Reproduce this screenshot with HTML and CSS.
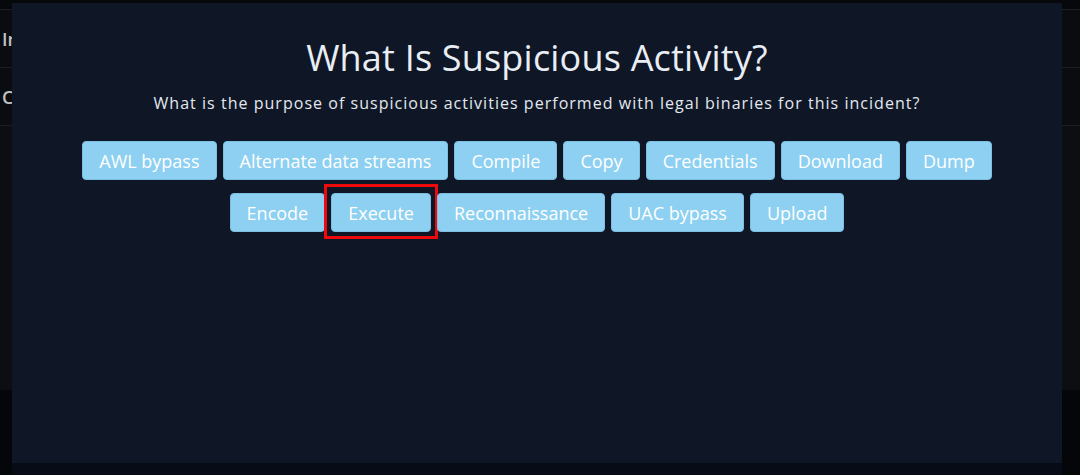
FILE: index.html
```html
<!DOCTYPE html>
<html>
<head>
<meta charset="utf-8">
<link rel="stylesheet" href="styles.css">
</head>
<body>
<div class="page">
  <div class="topbar"></div>
  <div class="row"><span class="cell">Incident</span></div>
  <div class="row"><span class="cell">Category</span></div>
  <div class="panel"></div>
</div>
<div class="modal">
  <div class="modal-body">
    <h1 class="title">What Is Suspicious Activity?</h1>
    <p class="subtitle">What is the purpose of suspicious activities performed with legal binaries for this incident?</p>
    <div class="options">
      <button class="opt">AWL bypass</button>
      <button class="opt">Alternate data streams</button>
      <button class="opt">Compile</button>
      <button class="opt">Copy</button>
      <button class="opt">Credentials</button>
      <button class="opt">Download</button>
      <button class="opt">Dump</button>
    </div>
    <div class="options row2">
      <button class="opt">Encode</button>
      <button class="opt selected">Execute</button>
      <button class="opt">Reconnaissance</button>
      <button class="opt">UAC bypass</button>
      <button class="opt">Upload</button>
    </div>
  </div>
  <div class="modal-foot"></div>
</div>
</body>
</html>
```

FILE: styles.css
```css
* { box-sizing: border-box; }
html, body { margin: 0; padding: 0; }
body {
  width: 1080px;
  height: 475px;
  overflow: hidden;
  background: #05060a;
  font-family: "Open Sans", "Noto Sans", sans-serif;
  position: relative;
}
.page { display: flex; flex-direction: column; }
.topbar { height: 10px; background: #07080c; border-bottom: 1px solid #1c1e22; }
.row {
  height: 58px;
  background: #0b0c10;
  border-bottom: 1px solid #1c1e22;
  display: flex;
  align-items: center;
  padding-left: 2px;
}
.cell { color: #c0c2c5; font-size: 18px; font-weight: 600; }
.panel { height: 264px; background: #0d0e11; }

.modal {
  position: absolute;
  left: 12px;
  top: 3px;
  width: 1050px;
  height: 480px;
  display: flex;
  flex-direction: column;
}
.modal-body {
  height: 460px;
  background: #0f1726;
  display: flex;
  flex-direction: column;
  align-items: center;
  padding-top: 33px;
}
.modal-foot { flex: 1; background: #060b15; }
.title {
  margin: 0;
  color: #e9eef5;
  font-weight: 400;
  font-size: 36px;
  line-height: 44px;
  letter-spacing: 0.2px;
}
.subtitle {
  margin: 11px 0 0;
  color: #e3e8ef;
  font-size: 16px;
  line-height: 24px;
  letter-spacing: 1.03px;
}
.options {
  display: flex;
  justify-content: center;
  gap: 6px;
  margin-top: 26px;
}
.options.row2 { margin-top: 13px; }
.opt {
  position: relative;
  height: 39px;
  padding: 0 16px;
  background: #8dd0f1;
  border: 1px solid #7cbfe3;
  border-radius: 4px;
  color: #ffffff;
  font-family: inherit;
  font-size: 18px;
}
.opt.selected::after {
  content: "";
  position: absolute;
  left: -8px;
  top: -10px;
  right: -8px;
  bottom: -8px;
  border: 3px solid #ee0a0a;
}
```
